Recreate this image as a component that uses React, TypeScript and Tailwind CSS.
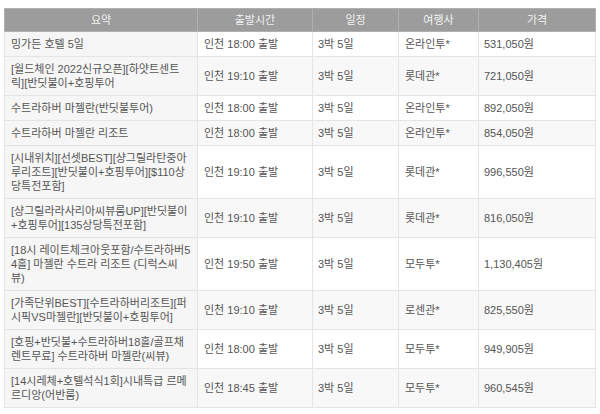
const rows = [
  { title: "밍가든 호텔 5일", time: "인천 18:00 출발", days: "3박 5일", agency: "온라인투*", price: "531,050원" },
  { title: "[월드체인 2022신규오픈][하얏트센트릭][반딧불이+호핑투어", time: "인천 19:10 출발", days: "3박 5일", agency: "롯데관*", price: "721,050원" },
  { title: "수트라하버 마젤란(반딧불투어)", time: "인천 18:00 출발", days: "3박 5일", agency: "온라인투*", price: "892,050원" },
  { title: "수트라하버 마젤란 리조트", time: "인천 18:00 출발", days: "3박 5일", agency: "온라인투*", price: "854,050원" },
  { title: "[시내위치][선셋BEST][샹그릴라탄중아루리조트][반딧불이+호핑투어][$110상당특전포함]", time: "인천 19:10 출발", days: "3박 5일", agency: "롯데관*", price: "996,550원" },
  { title: "[샹그릴라라사리아씨뷰룸UP][반딧불이+호핑투어][135상당특전포함]", time: "인천 19:10 출발", days: "3박 5일", agency: "롯데관*", price: "816,050원" },
  { title: "[18시 레이트체크아웃포함/수트라하버54홀] 마젤란 수트라 리조트 (디럭스씨뷰)", time: "인천 19:50 출발", days: "3박 5일", agency: "모두투*", price: "1,130,405원" },
  { title: "[가족단위BEST][수트라하버리조트][퍼시픽VS마젤란][반딧불이+호핑투어]", time: "인천 19:10 출발", days: "3박 5일", agency: "로센관*", price: "825,550원" },
  { title: "[호핑+반딧불+수트라하버18홀/골프채렌트무료] 수트라하버 마젤란(씨뷰)", time: "인천 18:00 출발", days: "3박 5일", agency: "모두투*", price: "949,905원" },
  { title: "[14시레체+호텔석식1회]시내특급 르메르디앙(어반룸)", time: "인천 18:45 출발", days: "3박 5일", agency: "모두투*", price: "960,545원" },
];

const headers = ["요약", "출발시간", "일정", "여행사", "가격"];

export default function App() {
  return (
    <div
      className="bg-white w-[600px] h-[414px] pt-[8px] pl-[4px]"
      style={{ fontFamily: '"Liberation Sans", "Noto Sans CJK KR", sans-serif' }}
    >
      <table className="w-[591px] table-fixed border-collapse text-[11px] leading-[14px] text-[#555]">
        <colgroup>
          <col className="w-[193px]" />
          <col className="w-[115px]" />
          <col className="w-[86px]" />
          <col className="w-[80px]" />
          <col className="w-[117px]" />
        </colgroup>
        <thead>
          <tr className="bg-[#9c9c9c] h-[23px]">
            {headers.map((h) => (
              <th key={h} className="border border-[#b0b0b0] text-center font-normal text-[#f2f2f2]">
                {h}
              </th>
            ))}
          </tr>
        </thead>
        <tbody>
          {rows.map((r, i) => {
            const bg = i % 2 === 1 ? "bg-[#f8f8f8]" : "bg-white";
            return (
              <tr key={i}>
                <td className="border border-[#e4e4e4] bg-[#f6f6f6] px-[6px] py-[5px] break-all">
                  {r.title}
                </td>
                <td className={`border border-[#e4e4e4] ${bg} px-[6px] py-[5px]`}>{r.time}</td>
                <td className={`border border-[#e4e4e4] ${bg} px-[5px] py-[5px]`}>{r.days}</td>
                <td className={`border border-[#e4e4e4] ${bg} px-[6px] py-[5px]`}>{r.agency}</td>
                <td className={`border border-[#e4e4e4] ${bg} px-[5px] py-[5px]`}>{r.price}</td>
              </tr>
            );
          })}
        </tbody>
      </table>
    </div>
  );
}
